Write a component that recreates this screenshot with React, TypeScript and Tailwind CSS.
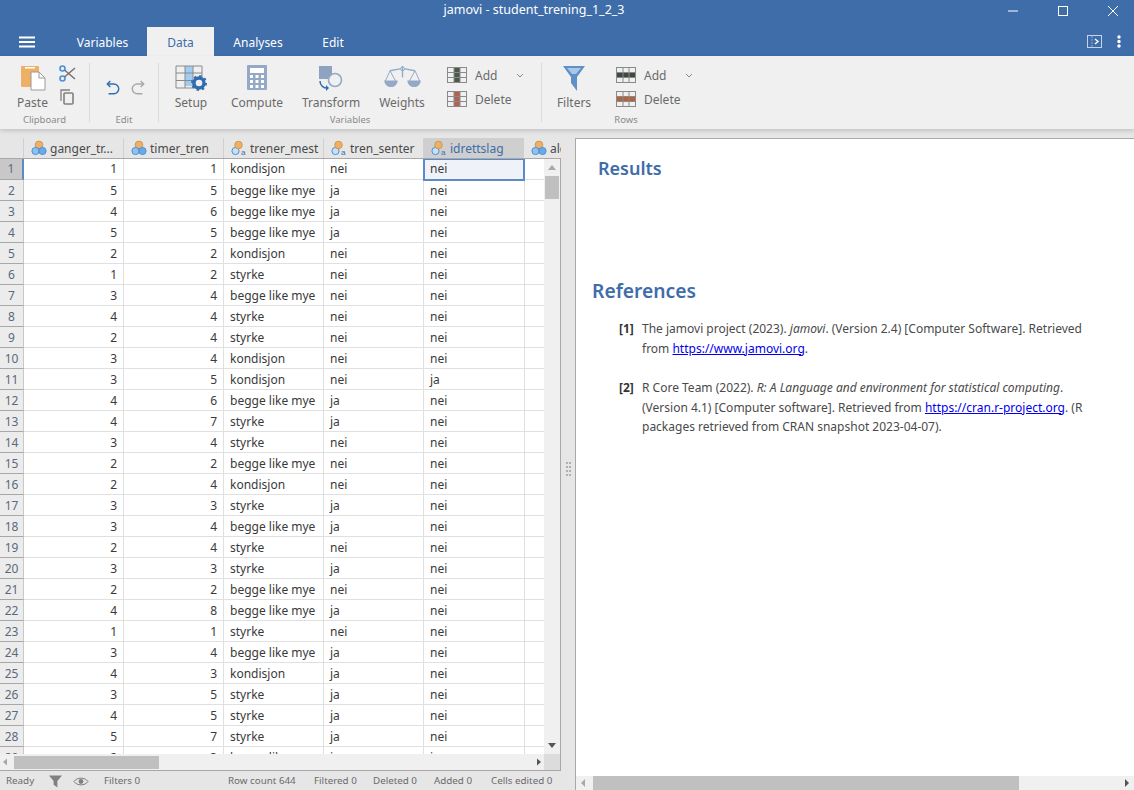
import React from "react";

const B = "begge like mye", K = "kondisjon", S = "styrke";
const rows: [number, number, string, string, string][] = [
  [1,1,K,"nei","nei"],[5,5,B,"ja","nei"],[4,6,B,"ja","nei"],[5,5,B,"ja","nei"],[2,2,K,"nei","nei"],
  [1,2,S,"nei","nei"],[3,4,B,"nei","nei"],[4,4,S,"nei","nei"],[2,4,S,"nei","nei"],[3,4,K,"nei","nei"],
  [3,5,K,"nei","ja"],[4,6,B,"ja","nei"],[4,7,S,"ja","nei"],[3,4,S,"nei","nei"],[2,2,B,"nei","nei"],
  [2,4,K,"nei","nei"],[3,3,S,"ja","nei"],[3,4,B,"ja","nei"],[2,4,S,"nei","nei"],[3,3,S,"ja","nei"],
  [2,2,B,"nei","nei"],[4,8,B,"ja","nei"],[1,1,S,"nei","nei"],[3,4,B,"ja","nei"],[4,3,K,"ja","nei"],
  [3,5,S,"ja","nei"],[4,5,S,"ja","nei"],[5,7,S,"ja","nei"],[2,3,B,"ja","ja"],
];

function VarIcon({ nominal }: { nominal?: boolean }) {
  return (
    <svg width="16" height="16" viewBox="0 0 16 16" className="shrink-0">
      {nominal ? (
        <>
          <circle cx="4.5" cy="11" r="3.6" fill="#c5e0f7" stroke="#4a90d9" strokeWidth="1" />
          <circle cx="7.5" cy="5" r="3.8" fill="#eeb065" stroke="#c98f45" strokeWidth="0.8" />
          <text x="10" y="14.5" fontSize="8" fill="#3e6da9" fontFamily="Liberation Sans">a</text>
        </>
      ) : (
        <>
          <circle cx="8" cy="5" r="3.9" fill="#eeb065" stroke="#c98f45" strokeWidth="0.8" />
          <circle cx="4.5" cy="11" r="3.6" fill="#8fc0ee" stroke="#4a90d9" strokeWidth="1" />
          <circle cx="11.5" cy="11" r="3.6" fill="#6ba9e8" stroke="#4a90d9" strokeWidth="1" />
        </>
      )}
    </svg>
  );
}

function GridIcon({ mode, color }: { mode: "col" | "row"; color: string }) {
  return (
    <svg width="20" height="16" viewBox="0 0 20 16">
      {mode === "col" ? <rect x="7" y="0.5" width="6" height="15" fill={color} /> : <rect x="0.5" y="5.5" width="19" height="5" fill={color} />}
      <rect x="0.5" y="0.5" width="19" height="15" fill="none" stroke="#8a8a8a" />
      <path d="M7 .5V15.5M13 .5V15.5M.5 5.5H19.5M.5 10.5H19.5" stroke="#8a8a8a" fill="none" />
    </svg>
  );
}

function Chevron() {
  return (
    <svg width="8" height="5" viewBox="0 0 8 5"><path d="M1 1l3 3 3-3" fill="none" stroke="#8a8a8a" /></svg>
  );
}

function BigBtn({ w, label, children }: { w: string; label: string; children: React.ReactNode }) {
  return (
    <div className={`${w} flex flex-col items-center shrink-0`}>
      <div className="h-[29px] shrink-0 flex items-start justify-center">{children}</div>
      <div className="text-[12px] leading-[18px] text-[#6a6a6a] whitespace-nowrap">{label}</div>
    </div>
  );
}

function AddDelete({ addIcon, delIcon, mode }: { addIcon: string; delIcon: string; mode: "col" | "row" }) {
  return (
    <div className="flex flex-col gap-[6px] pt-[1px] text-[12px] leading-[18px] text-[#6a6a6a]">
      <div className="flex items-center h-[18px]">
        <GridIcon mode={mode} color={addIcon} />
        <span className="ml-[8px] w-[34px] pt-[2px]">Add</span>
        <span className="ml-[7px] flex"><Chevron /></span>
      </div>
      <div className="flex items-center h-[18px]">
        <GridIcon mode={mode} color={delIcon} />
        <span className="ml-[8px] pt-[2px]">Delete</span>
      </div>
    </div>
  );
}

function Sep() {
  return <div className="w-px h-[59px] mt-[7px] bg-[#dadada] shrink-0" />;
}

function GroupLabel({ children, className }: { children: React.ReactNode; className?: string }) {
  return <div className={`text-[9.5px] leading-[12px] text-[#8a8a8a] text-center ${className ?? ""}`}>{children}</div>;
}

function Ribbon() {
  return (
    <div className="h-[73px] bg-[#f0f0f0] flex shrink-0 relative z-10 shadow-[0_2px_4px_rgba(0,0,0,0.15)]">
      <div className="w-[89px] shrink-0 flex flex-col pt-[9px]">
        <div className="flex h-[47px] pl-[15px]">
          <div className="w-[35px] flex flex-col items-center">
            <svg width="26" height="26" viewBox="0 0 26 26" className="shrink-0">
              <rect x="1" y="1" width="18" height="21" rx="1" fill="#eeb065" />
              <rect x="5" y="2" width="10" height="1.5" fill="#fff" />
              <path d="M11 7h8l6 6v12H11z" fill="#fff" stroke="#9a9a9a" />
              <path d="M19 7v6h6" fill="none" stroke="#9a9a9a" />
            </svg>
            <div className="mt-[3px] text-[12px] leading-[18px] text-[#6a6a6a]">Paste</div>
          </div>
          <div className="ml-[9px] flex flex-col items-center gap-[7px]">
            <svg width="17" height="17" viewBox="0 0 17 17">
              <circle cx="3.5" cy="3.5" r="2.5" fill="none" stroke="#4a90d9" strokeWidth="1.6" />
              <circle cx="3.5" cy="13.5" r="2.5" fill="none" stroke="#4a90d9" strokeWidth="1.6" />
              <path d="M5.5 5L16 14M5.5 12L16 3" stroke="#707070" strokeWidth="1.4" />
            </svg>
            <svg width="15" height="16" viewBox="0 0 15 16">
              <path d="M1 12V1h9" fill="none" stroke="#808080" strokeWidth="1.3" />
              <rect x="4" y="4" width="9" height="11" rx="1" fill="none" stroke="#808080" strokeWidth="1.6" />
            </svg>
          </div>
        </div>
        <GroupLabel className="mt-[2px]">Clipboard</GroupLabel>
      </div>
      <Sep />
      <div className="w-[68px] shrink-0 flex flex-col pt-[9px]">
        <div className="h-[47px] flex pl-[15px] gap-[9px] pt-[15px]">
          <svg width="16" height="15" viewBox="0 0 16 17">
            <path d="M5 1L1.500 4.500 5 8" fill="none" stroke="#2f6db0" strokeWidth="1.6" />
            <path d="M2 4.500h7a5 5 0 0 1 0 11H3" fill="none" stroke="#2f6db0" strokeWidth="1.6" />
          </svg>
          <svg width="16" height="15" viewBox="0 0 16 17">
            <path d="M11 1l3.500 3.500L11 8" fill="none" stroke="#a8a8a8" strokeWidth="1.6" />
            <path d="M14 4.500H7a5 5 0 0 0 0 11h6" fill="none" stroke="#a8a8a8" strokeWidth="1.6" />
          </svg>
        </div>
        <GroupLabel className="mt-[2px]">Edit</GroupLabel>
      </div>
      <Sep />
      <div className="w-[382px] shrink-0 flex flex-col pt-[9px]">
        <div className="flex h-[47px]">
          <BigBtn w="w-[66px] -ml-[1px]" label="Setup">
            <svg width="32" height="27" viewBox="0 0 32 27">
              <rect x="10" y="1" width="8" height="20" fill="#a3cdf0" />
              <path d="M1 1H27V23H1ZM10 1V23M18 1V23M1 8H27M1 15.500H27" fill="none" stroke="#8a8a8a" />
              <circle cx="24" cy="18" r="5" fill="#f0f0f0" stroke="#2f6db0" strokeWidth="3.4" />
              <circle cx="24" cy="18" r="7" fill="none" stroke="#2f6db0" strokeWidth="2" strokeDasharray="2.400 3.100" />
            </svg>
          </BigBtn>
          <BigBtn w="w-[66px]" label="Compute">
            <svg width="20" height="26" viewBox="0 0 20 26">
              <rect x="0" y="0" width="20" height="25" rx="1" fill="#93a9c6" />
              <rect x="3" y="3" width="14" height="5" fill="#fff" />
              <path d="M3 10h3v3H3zM8.500 10h3v3h-3zM14 10h3v3h-3zM3 15h3v3H3zM8.500 15h3v3h-3zM14 15h3v3h-3zM3 20h3v3H3zM8.500 20h3v3h-3zM14 20h3v3h-3z" fill="#fff" />
            </svg>
          </BigBtn>
          <BigBtn w="w-[82px]" label="Transform">
            <svg width="26" height="26" viewBox="0 0 26 26">
              <path d="M1 1h13v9a5 5 0 0 0-4 4H1z" fill="#8ea3c2" />
              <circle cx="17" cy="15" r="6.500" fill="none" stroke="#93a9c6" strokeWidth="1.6" />
              <path d="M2 16a7 7 0 0 0 8 7" fill="none" stroke="#2f6db0" strokeWidth="1.500" />
              <path d="M8 20l3 3-3 3z" fill="#2f6db0" />
            </svg>
          </BigBtn>
          <BigBtn w="w-[60px]" label="Weights">
            <svg width="37" height="25" viewBox="0 0 38 26">
              <path d="M6 6L19 3.500L32 6" fill="none" stroke="#93a9c6" strokeWidth="1.400" />
              <circle cx="19" cy="4" r="2" fill="#f0f0f0" stroke="#93a9c6" />
              <path d="M19 1V13" stroke="#93a9c6" strokeWidth="1.400" />
              <path d="M6 6L1 17M6 6L12 17M32 6L26 17M32 6L37 17" stroke="#93a9c6" fill="none" />
              <path d="M0 16h14a7 7 0 0 1-14 0zM24 16h14a7 7 0 0 1-14 0z" fill="#93a9c6" />
            </svg>
          </BigBtn>
          <div className="ml-[15px]"><AddDelete addIcon="#4a5a48" delIcon="#b5604e" mode="col" /></div>
        </div>
        <GroupLabel className="mt-[2px]">Variables</GroupLabel>
      </div>
      <Sep />
      <div className="flex-1 flex flex-col pt-[9px]">
        <div className="flex h-[47px]">
          <BigBtn w="w-[66px] -ml-[1px]" label="Filters">
            <svg width="24" height="27" viewBox="0 0 24 27">
              <path d="M1 1h22L15 12v14l-6-8v-6z" fill="#5f90c8" />
              <path d="M5 3h14l-5 6h-4z" fill="#a9c7e6" />
            </svg>
          </BigBtn>
          <div className="ml-[9px]"><AddDelete addIcon="#3f4a3e" delIcon="#b5623a" mode="row" /></div>
        </div>
        <GroupLabel className="mt-[2px] w-[168px]">Rows</GroupLabel>
      </div>
    </div>
  );
}

const cols = [
  { name: "ganger_tr...", nom: false },
  { name: "timer_tren", nom: false },
  { name: "trener_mest", nom: true },
  { name: "tren_senter", nom: true },
  { name: "idrettslag", nom: true, active: true },
];

function Table() {
  return (
    <div className="w-[561px] flex flex-col overflow-hidden shrink-0">
      <div className="flex h-[20px] shrink-0 overflow-hidden text-[#4a4a4a]">
        <div className="w-[23px] shrink-0 bg-[#e6e6e6]" />
        {cols.map((c) => (
          <div key={c.name} className={`w-[100px] shrink-0 flex items-center pl-[7px] gap-[3px] border-l border-[#d0d0d0] ${c.active ? "bg-[#cfcfcf] text-[#3e6da9]" : "bg-[#e6e6e6]"}`}>
            <VarIcon nominal={c.nom} />
            <span className="text-[12px] pt-[1px] whitespace-nowrap">{c.name}</span>
          </div>
        ))}
        <div className="w-[38px] shrink-0 overflow-hidden flex items-center pl-[7px] gap-[3px] border-l border-[#d0d0d0] bg-[#e6e6e6]">
          <VarIcon />
          <span className="text-[12px] pt-[1px]">ald</span>
        </div>
      </div>
      <div className="flex flex-1 min-h-0 border-t border-b border-r border-[#a8a8a8]">
        <div className="flex-1 min-w-0 flex flex-col overflow-hidden bg-white">
          <div className="flex-1 min-h-0 overflow-hidden">
            {rows.map((r, i) => (
              <div key={i} className="flex h-[21px] text-[12px] leading-[22px] text-[#3a3a3a]">
                <div className={`w-[24px] shrink-0 text-center text-[#5a6a7a] border-b border-[#a8a8a8] ${i === 0 ? "bg-[#c8c8c8] border-r-2 border-r-[#5b8ac6] leading-[20px]" : "bg-[#ececec] border-r border-r-[#c8c8c8]"}`}>{i + 1}</div>
                <div className={`w-[100px] shrink-0 text-right pr-[6px] border-b border-r border-[#e0e0e0] ${i === 0 ? "leading-[20px]" : ""}`}>{r[0]}</div>
                <div className={`w-[100px] shrink-0 text-right pr-[6px] border-b border-r border-[#e0e0e0] ${i === 0 ? "leading-[20px]" : ""}`}>{r[1]}</div>
                <div className={`w-[100px] shrink-0 pl-[6px] border-b border-r border-[#e0e0e0] whitespace-nowrap ${i === 0 ? "leading-[20px]" : ""}`}>{r[2]}</div>
                <div className={`w-[100px] shrink-0 pl-[6px] border-b border-r border-[#e0e0e0] ${i === 0 ? "leading-[20px]" : ""}`}>{r[3]}</div>
                {i === 0 ? (
                  <div className="relative z-10 -mt-[1px] -ml-[1px] h-[23px] w-[102px] shrink-0 border-2 border-[#5b8ac6] bg-[#eff2f8] leading-[18px] pl-[5px]">{r[4]}</div>
                ) : (
                  <div className="w-[101px] shrink-0 pl-[6px] border-b border-r border-[#e0e0e0]">{r[4]}</div>
                )}
                <div className="w-[20px] shrink-0 border-b border-[#e0e0e0]" />
              </div>
            ))}
          </div>
          <div className="h-[16px] shrink-0 bg-[#f0f0f0] flex items-center">
            <svg width="14" height="16" viewBox="0 0 14 16"><path d="M3 8L7 4.500v7z" fill="#a8a8a8" /></svg>
            <div className="w-[145px] h-[13px] bg-[#c0c0c0]" />
            <div className="flex-1" />
            <svg width="14" height="16" viewBox="0 0 14 16"><path d="M11 8L7 4.500v7z" fill="#555" /></svg>
          </div>
        </div>
        <div className="w-[16px] shrink-0 flex flex-col bg-[#f0f0f0] relative z-20">
          <div className="h-[17px] flex items-center justify-center">
            <svg width="10" height="6" viewBox="0 0 10 6"><path d="M5 0l4 5H1z" fill="#a8a8a8" /></svg>
          </div>
          <div className="mx-[1px] h-[23px] bg-[#c0c0c0]" />
          <div className="flex-1" />
          <div className="h-[16px] flex items-center justify-center">
            <svg width="10" height="6" viewBox="0 0 10 6"><path d="M5 5l4-5H1z" fill="#555" /></svg>
          </div>
          <div className="h-[16px] bg-[#dcdcdc]" />
        </div>
      </div>
    </div>
  );
}

function Results() {
  return (
    <div className="flex-1 min-w-0 bg-white border-t border-l border-[#a8a8a8] flex flex-col">
      <div className="flex-1 min-h-0 overflow-hidden text-[12px] leading-[19.500px] text-[#4a4a4a]">
        <div className="pl-[22px] pt-[16px] text-[18px] leading-[26px] font-semibold text-[#3e6da9]">Results</div>
        <div className="pl-[16px] mt-[96px] text-[19.250px] leading-[28px] font-semibold text-[#3e6da9]">References</div>
        <div className="flex mt-[14px] pl-[43px] w-[518px]">
          <div className="w-[23px] shrink-0 font-bold text-[#333]">[1]</div>
          <div>The jamovi project (2023). <i>jamovi</i>. (Version 2.4) [Computer Software]. Retrieved from <span className="text-[#0000ee] underline">https://www.jamovi.org</span>.</div>
        </div>
        <div className="flex mt-[20px] pl-[43px] w-[518px]">
          <div className="w-[23px] shrink-0 font-bold text-[#333]">[2]</div>
          <div>R Core Team (2022). <i>R: A Language and environment for statistical computing</i>. (Version 4.1) [Computer software]. Retrieved from <span className="text-[#0000ee] underline">https://cran.r-project.org</span>. (R packages retrieved from CRAN snapshot 2023-04-07).</div>
        </div>
      </div>
      <div className="h-[14px] shrink-0 bg-[#f0f0f0] flex items-center">
        <svg width="17" height="14" viewBox="0 0 17 14"><path d="M5 7l4-4v8z" fill="#a8a8a8" /></svg>
        <div className="w-[426px] h-[14px] bg-[#c0c0c0]" />
        <div className="flex-1" />
        <svg width="17" height="14" viewBox="0 0 17 14"><path d="M12 7L8 3v8z" fill="#555" /></svg>
      </div>
    </div>
  );
}

export default function App() {
  return (
    <div className="w-[1134px] h-[790px] overflow-hidden flex flex-col bg-[#e6e6e6]" style={{ fontFamily: '"Noto Sans", "Open Sans", sans-serif' }}>
      <div className="h-[56px] shrink-0 bg-[#3e6da9] text-white relative">
        <div className="h-[27px] pb-[6px] flex items-center justify-center text-[12.500px] pr-[66px]">jamovi - student_trening_1_2_3</div>
        <div className="absolute top-0 right-[-4px] flex h-[21px] items-center">
          <div className="w-[50px] flex justify-center"><svg width="12" height="12" viewBox="0 0 12 12"><path d="M1 6H11" stroke="#fff" /></svg></div>
          <div className="w-[50px] flex justify-center"><svg width="12" height="12" viewBox="0 0 12 12"><rect x="1.500" y="1.500" width="9" height="9" fill="none" stroke="#fff" /></svg></div>
          <div className="w-[50px] flex justify-center"><svg width="12" height="12" viewBox="0 0 12 12"><path d="M1 1L11 11M11 1L1 11" stroke="#fff" /></svg></div>
        </div>
        <div className="h-[29px] flex items-stretch text-[12px]">
          <div className="w-[56px] flex items-center pl-[19px]">
            <svg width="17" height="12" viewBox="0 0 17 12"><path d="M0 1.500H16M0 6H16M0 10.500H16" stroke="#fff" strokeWidth="2" /></svg>
          </div>
          <div className="w-[91px] flex items-center justify-center pl-[2px] pt-[2px]">Variables</div>
          <div className="w-[67px] bg-[#f0f0f0] text-[#3e6da9] flex items-center justify-center pt-[2px]">Data</div>
          <div className="w-[88px] flex items-center justify-center pt-[2px]">Analyses</div>
          <div className="w-[62px] flex items-center justify-center pt-[2px]">Edit</div>
          <div className="flex-1 flex items-center justify-end pr-[13px] gap-[15px]">
            <svg width="15" height="13" viewBox="0 0 15 13">
              <rect x="0.500" y="0.500" width="14" height="12" fill="none" stroke="#c6d3e6" />
              <path d="M5 1V12" stroke="#8fa9cc" strokeDasharray="2 1" />
              <path d="M8 4l3 2.500L8 9" fill="none" stroke="#fff" strokeWidth="1.400" />
            </svg>
            <svg width="4" height="13" viewBox="0 0 4 13"><circle cx="2" cy="2" r="1.700" fill="#fff" /><circle cx="2" cy="6.500" r="1.700" fill="#fff" /><circle cx="2" cy="11" r="1.700" fill="#fff" /></svg>
          </div>
        </div>
      </div>
      <Ribbon />
      <div className="flex-1 min-h-0 flex pt-[9px]">
        <div className="w-[575px] shrink-0 flex flex-col">
          <div className="flex-1 min-h-0 flex">
            <Table />
            <div className="flex-1 flex items-center justify-center">
              <svg width="5" height="15" viewBox="0 0 5 15" className="mt-[27px]">
                <path d="M0 1h2v2H0zM3 1h2v2H3zM0 5h2v2H0zM3 5h2v2H3zM0 9h2v2H0zM3 9h2v2H3zM0 13h2v2H0zM3 13h2v2H3z" fill="#b0b0b0" />
              </svg>
            </div>
          </div>
          <div className="h-[19px] pt-[1px] shrink-0 flex items-center text-[9.800px] text-[#6a6a6a] whitespace-nowrap">
            <span className="ml-[6px] w-[42px]">Ready</span>
            <svg width="15" height="15" viewBox="0 0 16 15"><path d="M1 1h14L10 7v7l-4-3V7z" fill="#808080" /></svg>
            <svg className="ml-[10px]" width="16" height="11" viewBox="0 0 16 11"><path d="M1 5.500C4 1 12 1 15 5.500C12 10 4 10 1 5.500Z" fill="none" stroke="#808080" /><circle cx="8" cy="5.500" r="2.400" fill="#808080" /></svg>
            <span className="ml-[15px] w-[124px]">Filters 0</span>
            <span className="w-[86px]">Row count 644</span>
            <span className="w-[59px]">Filtered 0</span>
            <span className="w-[61px]">Deleted 0</span>
            <span className="w-[57px]">Added 0</span>
            <span>Cells edited 0</span>
          </div>
        </div>
        <Results />
      </div>
    </div>
  );
}
